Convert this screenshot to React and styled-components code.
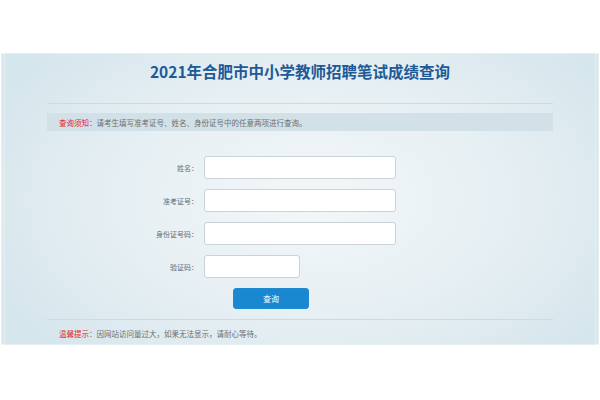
import React from "react";
import styled, { createGlobalStyle } from "styled-components";

const Global = createGlobalStyle`
  html, body { margin: 0; padding: 0; background: #ffffff; }
  body { font-family: "Noto Sans CJK SC", "Noto Sans", sans-serif; }
  * { box-sizing: border-box; }
`;

const Page = styled.div`
  width: 600px;
  height: 400px;
  padding-top: 53px;
  background: #ffffff;
`;

const Panel = styled.div`
  height: 292px;
  margin: 0 1px;
  border: 1px solid #e6f0f4;
  border-left: 4px double #e4eff3;
  border-right: 4px double #e4eff3;
  background: radial-gradient(ellipse 60% 75% at 52% 50%, #f3f7f9 0%, #e6eff3 55%, #d6e6ed 100%);
  padding: 0 42px;
  display: flex;
  flex-direction: column;
`;

const Title = styled.h1`
  margin: 6px 0 0;
  height: 22px;
  line-height: 22px;
  text-align: center;
  font-size: 15.5px;
  font-weight: 700;
  color: #1d5a97;
  letter-spacing: 0;
`;

const Divider = styled.div`
  height: 1px;
  background: #cbdbe2;
  margin-top: ${(p) => p.$top}px;
`;

const Notice = styled.div`
  margin-top: 9px;
  height: 18px;
  background: #d2e1e7;
  display: flex;
  align-items: center;
  padding-left: 12px;
  font-size: 7.5px;
  color: #6a6f73;
  white-space: nowrap;
`;

const Red = styled.span`
  color: #e3231f;
`;

const Form = styled.div`
  margin-top: 25px;
  margin-left: 98px;
  display: flex;
  flex-direction: column;
  gap: 10px;
`;

const Row = styled.div`
  display: flex;
  align-items: center;
  gap: 6px;
`;

const Label = styled.label`
  width: 53px;
  text-align: right;
  font-size: 7px;
  color: #666b6f;
  white-space: nowrap;
`;

const Input = styled.div`
  width: ${(p) => p.$w}px;
  height: 23px;
  background: #ffffff;
  border: 1px solid #c9d3d8;
  border-radius: 3px;
`;

const Button = styled.button`
  margin-left: 88px;
  width: 76px;
  height: 21px;
  border: 1px solid #1f8ad2;
  border-radius: 3px;
  background: #1a87d1;
  color: #ffffff;
  font-family: "Noto Sans CJK SC", sans-serif;
  font-size: 8px;
  padding: 0;
  cursor: pointer;
`;

const Footer = styled.div`
  margin-top: 9px;
  padding-left: 12px;
  font-size: 7.5px;
  line-height: 10px;
  color: #6a6f73;
  white-space: nowrap;
`;

const fields = [
  { label: "姓名：", w: 192 },
  { label: "准考证号：", w: 192 },
  { label: "身份证号码：", w: 192 },
  { label: "验证码：", w: 96 },
];

export default function App() {
  return (
    <>
      <Global />
      <Page>
        <Panel>
          <Title>2021年合肥市中小学教师招聘笔试成绩查询</Title>
          <Divider $top={21} />
          <Notice>
            <Red>查询须知</Red>：请考生填写准考证号、姓名、身份证号中的任意两项进行查询。
          </Notice>
          <Form>
            {fields.map((f) => (
              <Row key={f.label}>
                <Label>{f.label}</Label>
                <Input $w={f.w} />
              </Row>
            ))}
            <Button>查询</Button>
          </Form>
          <Divider $top={10} />
          <Footer>
            <Red>温馨提示</Red>：因网站访问量过大，如果无法显示，请耐心等待。
          </Footer>
        </Panel>
      </Page>
    </>
  );
}
